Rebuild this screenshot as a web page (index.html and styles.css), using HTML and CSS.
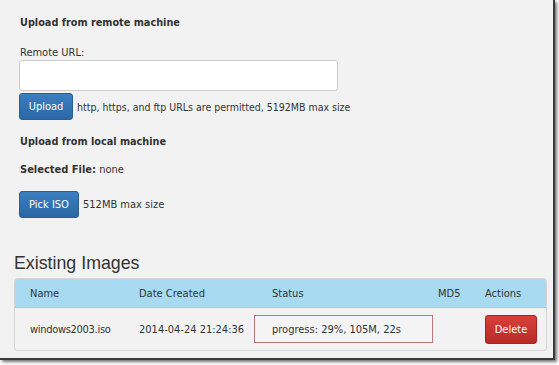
FILE: index.html
```html
<!DOCTYPE html>
<html>
<head>
<meta charset="utf-8">
<link rel="stylesheet" href="styles.css">
</head>
<body>
<div class="frame">
  <div class="uploads">
    <h4 class="sub">Upload from remote machine</h4>
    <div class="label">Remote URL:</div>
    <div class="input"></div>
    <div class="row">
      <span class="btn btn-blue">Upload</span>
      <span class="note note-long">http, https, and ftp URLs are permitted, 5192MB max size</span>
    </div>
    <h4 class="sub sub2">Upload from local machine</h4>
    <div class="selected"><b>Selected File:</b> none</div>
    <div class="row row2">
      <span class="btn btn-blue btn-pick">Pick ISO</span>
      <span class="note">512MB max size</span>
    </div>
  </div>
  <h3 class="title">Existing Images</h3>
  <div class="panel">
    <div class="thead">
      <span class="c-name">Name</span>
      <span class="c-date">Date Created</span>
      <span class="c-status">Status</span>
      <span class="c-md5">MD5</span>
      <span class="c-act">Actions</span>
    </div>
    <div class="trow">
      <span class="c-name">windows2003.iso</span>
      <span class="c-date">2014-04-24 21:24:36</span>
      <span class="c-status-box">progress: 29%, 105M, 22s</span>
      <span class="c-md5"></span>
      <span class="c-act"><span class="btn btn-red">Delete</span></span>
    </div>
  </div>
</div>
</body>
</html>
```

FILE: styles.css
```css
html, body {
  margin: 0;
  padding: 0;
  background: #ffffff;
}
body {
  width: 559px;
  height: 365px;
  overflow: hidden;
  font-family: "DejaVu Sans Condensed", "DejaVu Sans", sans-serif;
  font-stretch: condensed;
  font-size: 11px;
  color: #333333;
}
.frame {
  box-sizing: border-box;
  width: 555px;
  height: 360px;
  background: #f2f2f2;
  border-right: 2px solid #3a3a3a;
  border-bottom: 2px solid #3a3a3a;
  box-shadow: 2px 2px 3px rgba(0,0,0,0.55);
  padding-left: 14px;
  padding-top: 1px;
}
.uploads {
  padding-left: 5px;
}
.sub {
  margin: 14px 0 0 1px;
  font-size: 10.8px;
  font-weight: bold;
  line-height: 16px;
  color: #333;
}
.sub2 {
  margin-top: 14px;
}
.label {
  margin: 14px 0 0 1px;
  line-height: 16px;
}
.input {
  box-sizing: border-box;
  width: 319px;
  height: 31px;
  margin-top: -1px;
  background: #ffffff;
  border: 1px solid #cccccc;
  border-radius: 3px;
}
.row {
  display: flex;
  align-items: center;
  gap: 4px;
  margin-top: 2px;
}
.row2 {
  margin-top: 13px;
}
.btn {
  display: inline-flex;
  align-items: center;
  justify-content: center;
  box-sizing: border-box;
  height: 27px;
  border-radius: 3px;
  color: #ffffff;
  font-size: 11px;
}
.btn-blue {
  width: 54px;
  background: linear-gradient(#3b7fc0, #2a67a5);
  border: 1px solid #2a5f96;
}
.btn-pick {
  width: 60px;
}
.note {
  line-height: 16px;
}
.note-long {
  font-size: 10.5px;
}
.selected {
  margin: 12px 0 0 1px;
  line-height: 16px;
}
.selected b {
  font-size: 11px;
}
.title {
  margin: 34px 0 0 0;
  font-family: "Liberation Sans", Arial, sans-serif;
  font-stretch: normal;
  font-size: 17.8px;
  font-weight: normal;
  line-height: 22px;
  color: #333;
}
.panel {
  box-sizing: border-box;
  width: 533px;
  height: 73px;
  margin-top: 4px;
  border: 1px solid #d6d6d6;
  border-radius: 3px;
  background: #f2f2f2;
  overflow: hidden;
}
.thead, .trow {
  display: flex;
  align-items: center;
}
.thead {
  height: 28px;
  background: #a8daf1;
  border-bottom: 1px solid #9ccfe6;
}
.trow {
  height: 42px;
}
.c-name { width: 109px; padding-left: 15px; flex: none; }
.c-date { width: 133px; flex: none; }
.c-status { width: 166px; flex: none; }
.c-md5 { width: 47px; flex: none; }
.c-act { flex: none; }
.trow .c-name { letter-spacing: -0.3px; }
.c-status-box {
  box-sizing: border-box;
  flex: none;
  width: 179px;
  height: 28px;
  margin-left: -18px;
  margin-right: 5px;
  display: flex;
  align-items: center;
  padding-left: 17px;
  border: 1px solid #b87878;
  background: #f4f4f4;
}
.btn-red {
  width: 52px;
  height: 29px;
  background: linear-gradient(#d9403b, #b82a26);
  border: 1px solid #a52420;
}
```
